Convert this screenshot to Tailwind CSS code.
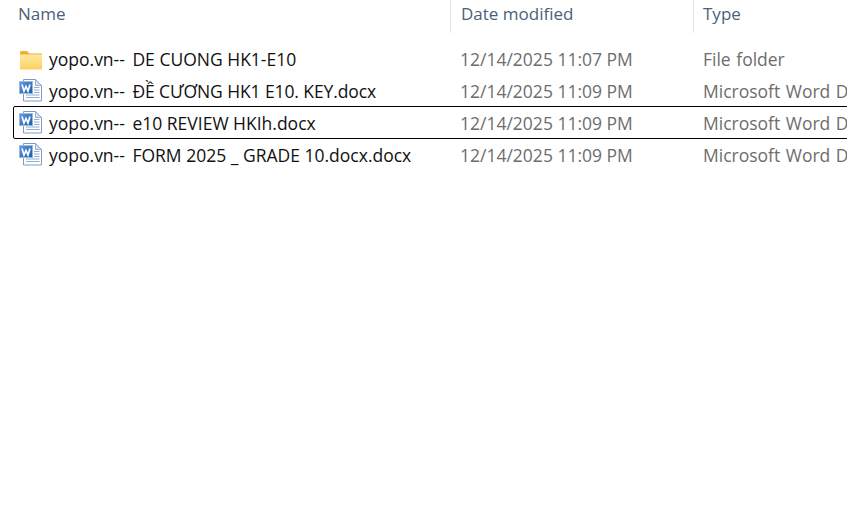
<!DOCTYPE html>
<html lang="en">
<head>
    <meta charset="UTF-8">
    <title>Explorer</title>
    <script src="https://cdn.jsdelivr.net/npm/@tailwindcss/browser@4"></script>
</head>
<body class="bg-white w-[847px] h-[526px] overflow-hidden font-['Open_Sans',sans-serif] text-[17.5px] leading-[30px]">
    <svg width="0" height="0" class="absolute">
        <defs>
            <linearGradient id="folder-fill" x1="0" y1="0" x2="0" y2="1">
                <stop offset="0" stop-color="#ffe9a0"/>
                <stop offset="1" stop-color="#fcd061"/>
            </linearGradient>
            <linearGradient id="word-fill" x1="0" y1="0" x2="1" y2="1">
                <stop offset="0" stop-color="#5f9be0"/>
                <stop offset="1" stop-color="#1f5aa8"/>
            </linearGradient>
            <symbol id="folder" viewBox="0 0 24 20">
                <path d="M1 2.500C1 1.700 1.600 1 2.400 1H8l2.500 2.500H23V6H1Z" fill="#f0b030"/>
                <rect x="1" y="4.500" width="22" height="15" fill="url(#folder-fill)"/>
            </symbol>
            <symbol id="word" viewBox="0 0 24 24">
                <path d="M4.500.5H16.500L22.500 6.500V22H4.500Z" fill="#fff" stroke="#7f9cc0"/>
                <path d="M16.500.5V6.500H22.500Z" fill="#d5e0ec" stroke="#7f9cc0" stroke-width=".7"/>
                <path d="M15 8.500H20.500M15 11H20.500M15 13.500H20.500M7 16H20.500M7 18.500H20.500" stroke="#8fb0d6" stroke-width="1.100"/>
                <rect x=".5" y="2.500" width="13" height="12" fill="url(#word-fill)" stroke="#9db8d8"/>
                <path d="M3 5.500 5 12 7 7.500 9 12 11 5.500" fill="none" stroke="#fff" stroke-width="1.700"/>
            </symbol>
        </defs>
    </svg>

    <!-- Column headers -->
    <div class="grid grid-cols-[450px_243px_154px] h-[33px] text-[17px] text-[#4c607a]">
        <div class="pl-[18px] leading-[27px]">Name</div>
        <div class="pl-[10px] leading-[27px] border-l border-[#e5e5e5]">Date modified</div>
        <div class="pl-[9px] leading-[27px] border-l border-[#e5e5e5]">Type</div>
    </div>

    <!-- Rows -->
    <div class="mt-[11px] flex flex-col">
        <div class="grid grid-cols-[450px_243px_154px] h-[32px] whitespace-nowrap">
            <div class="flex items-center pl-[19px] text-[#111]">
                <svg class="w-[24px] h-[20px] mr-[6px]"><use href="#folder"/></svg>
                <span class="pb-[2px]"><span class="mr-[3px]">yopo.vn--</span> DE CUONG HK1-E10</span>
            </div>
            <div class="pl-[10px] text-[#6d6d6d]">12/14/2025 11:07 PM</div>
            <div class="pl-[10px] text-[#6d6d6d] overflow-hidden [word-spacing:1px]">File folder</div>
        </div>
        <div class="grid grid-cols-[450px_243px_154px] h-[32px] whitespace-nowrap">
            <div class="flex items-center pl-[19px] text-[#111]">
                <svg class="w-[24px] h-[24px] mr-[6px] -mt-[3px]"><use href="#word"/></svg>
                <span class="pb-[2px]"><span class="mr-[3px]">yopo.vn--</span> <span class="tracking-[-0.1px]">ĐỀ CƯƠNG HK1 E10. KEY.docx</span></span>
            </div>
            <div class="pl-[10px] text-[#6d6d6d]">12/14/2025 11:09 PM</div>
            <div class="pl-[10px] text-[#6d6d6d] overflow-hidden [word-spacing:1px]">Microsoft Word Document</div>
        </div>
        <div class="relative grid grid-cols-[450px_243px_154px] h-[32px] whitespace-nowrap">
            <div class="flex items-center pl-[19px] text-[#111]">
                <svg class="w-[24px] h-[24px] mr-[6px] -mt-[3px]"><use href="#word"/></svg>
                <span class="pb-[2px]"><span class="mr-[3px]">yopo.vn--</span> e10 REVIEW HKIh.docx</span>
            </div>
            <div class="pl-[10px] text-[#6d6d6d]">12/14/2025 11:09 PM</div>
            <div class="pl-[10px] text-[#6d6d6d] overflow-hidden [word-spacing:1px]">Microsoft Word Document</div>
            <!-- Focus outline runs off the right edge -->
            <div class="absolute left-[13px] -right-[10px] -top-[2px] h-[33px] border border-black rounded-[2px]"></div>
        </div>
        <div class="grid grid-cols-[450px_243px_154px] h-[32px] whitespace-nowrap">
            <div class="flex items-center pl-[19px] text-[#111]">
                <svg class="w-[24px] h-[24px] mr-[6px] -mt-[3px]"><use href="#word"/></svg>
                <span class="pb-[2px]"><span class="mr-[3px]">yopo.vn--</span> FORM 2025 _ GRADE 10.docx.docx</span>
            </div>
            <div class="pl-[10px] text-[#6d6d6d]">12/14/2025 11:09 PM</div>
            <div class="pl-[10px] text-[#6d6d6d] overflow-hidden [word-spacing:1px]">Microsoft Word Document</div>
        </div>
    </div>
</body>
</html>
